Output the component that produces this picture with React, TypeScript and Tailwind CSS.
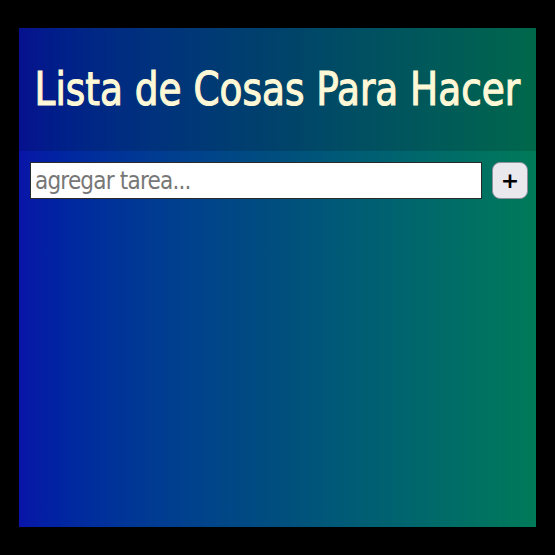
import { useState } from "react";

export default function App() {
    const [text, setText] = useState("");
    const [tasks, setTasks] = useState<string[]>([]);

    const addTask = () => {
        if (!text.trim()) return;
        setTasks([...tasks, text.trim()]);
        setText("");
    };

    return (
        <div className="w-full h-[555px] bg-black flex items-center justify-center">
            <div className="w-[517px] h-[499px] bg-linear-to-r from-[#0914a8] via-[#004e7e] to-[#007a58] flex flex-col overflow-hidden">
                {/* Header */}
                <div className="h-[123px] shrink-0 bg-black/15 flex items-center justify-center">
                    <h1
                        className="text-[47px] text-[#fff8d6] leading-none pb-[3px] whitespace-nowrap scale-x-[0.885] [-webkit-text-stroke:1.1px_#fff8d6]"
                        style={{ fontFamily: "'DejaVu Sans Condensed', 'DejaVu Sans', sans-serif" }}
                    >
                        Lista de Cosas Para Hacer
                    </h1>
                </div>

                {/* Form */}
                <div className="flex items-center gap-[10px] pl-[11px] pr-[8px] mt-[11px]">
                    <input
                        value={text}
                        onChange={(e) => setText(e.target.value)}
                        onKeyDown={(e) => e.key === "Enter" && addTask()}
                        placeholder="agregar tarea..."
                        className="flex-1 min-w-0 h-[37px] bg-white border border-[#2a2a2a] px-[4px] text-[24px] tracking-[-0.8px] text-[#333] placeholder:text-[#777] outline-none"
                        style={{ fontFamily: "'DejaVu Sans Condensed', 'DejaVu Sans', sans-serif" }}
                    />
                    <button
                        onClick={addTask}
                        className="w-[36px] h-[37px] shrink-0 rounded-[8px] bg-[#e9e9ed] border border-[#8f8f9d] flex items-center justify-center text-[22px] font-bold text-black leading-none"
                        style={{ fontFamily: "'DejaVu Sans', sans-serif" }}
                    >
                        +
                    </button>
                </div>

                <ul className="px-[11px] mt-[10px] flex flex-col gap-[6px]">
                    {tasks.map((t, i) => (
                        <li key={i} className="text-white text-[18px]">{t}</li>
                    ))}
                </ul>
            </div>
        </div>
    );
}
